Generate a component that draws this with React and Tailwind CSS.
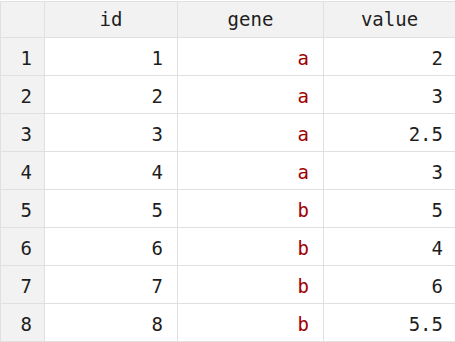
import React from "react";

const rows = [
  [1, 1, "a", "2"],
  [2, 2, "a", "3"],
  [3, 3, "a", "2.5"],
  [4, 4, "a", "3"],
  [5, 5, "b", "5"],
  [6, 6, "b", "4"],
  [7, 7, "b", "6"],
  [8, 8, "b", "5.5"],
];

export default function App() {
  return (
    <div
      className="w-[455px] h-[342px] overflow-hidden bg-white text-[19px] text-[#1e1e1e]"
      style={{ fontFamily: '"DejaVu Sans Mono", monospace' }}
    >
      <div className="mt-px border-t border-l border-[#e0e0e0]">
        <div className="flex h-[36px] border-b border-[#e0e0e0] bg-[#f2f2f2]">
          <div className="w-[44px] border-r border-[#e0e0e0]" />
          <div className="w-[133px] border-r border-[#e0e0e0] flex items-center justify-center">id</div>
          <div className="w-[146px] border-r border-[#e0e0e0] flex items-center justify-center">gene</div>
          <div className="flex-1 flex items-center justify-center">value</div>
        </div>
        {rows.map((r) => (
          <div key={r[0]} className="flex h-[38px] border-b border-[#e0e0e0]">
            <div className="w-[44px] border-r border-[#e0e0e0] bg-[#f2f2f2] flex items-center justify-end pr-3 pt-[3px]">{r[0]}</div>
            <div className="w-[133px] border-r border-[#e0e0e0] flex items-center justify-end pr-[14px] pt-[3px]">{r[1]}</div>
            <div className="w-[146px] border-r border-[#e0e0e0] flex items-center justify-end pr-[14px] pt-[3px] text-[#a00000]">{r[2]}</div>
            <div className="flex-1 flex items-center justify-end pr-3 pt-[3px]">{r[3]}</div>
          </div>
        ))}
      </div>
    </div>
  );
}
